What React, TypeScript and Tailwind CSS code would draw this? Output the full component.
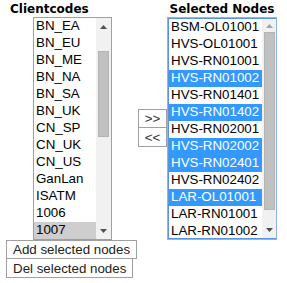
import React from "react";

const leftItems: { t: string; sel?: boolean }[] = [
  { t: "BN_EA" },
  { t: "BN_EU" },
  { t: "BN_ME" },
  { t: "BN_NA" },
  { t: "BN_SA" },
  { t: "BN_UK" },
  { t: "CN_SP" },
  { t: "CN_UK" },
  { t: "CN_US" },
  { t: "GanLan" },
  { t: "ISATM" },
  { t: "1006" },
  { t: "1007", sel: true },
];

const rightItems: { t: string; sel?: boolean }[] = [
  { t: "BSM-OL01001" },
  { t: "HVS-OL01001" },
  { t: "HVS-RN01001" },
  { t: "HVS-RN01002", sel: true },
  { t: "HVS-RN01401" },
  { t: "HVS-RN01402", sel: true },
  { t: "HVS-RN02001" },
  { t: "HVS-RN02002", sel: true },
  { t: "HVS-RN02401", sel: true },
  { t: "HVS-RN02402" },
  { t: "LAR-OL01001", sel: true },
  { t: "LAR-RN01001" },
  { t: "LAR-RN01002" },
];

function Up({ color }: { color: string }) {
  return (
    <svg width="7" height="4" viewBox="0 0 7 4" className="block">
      <polygon points="0,4 7,4 3.5,0" fill={color} />
    </svg>
  );
}
function Down({ color }: { color: string }) {
  return (
    <svg width="7" height="4" viewBox="0 0 7 4" className="block">
      <polygon points="0,0 7,0 3.5,4" fill={color} />
    </svg>
  );
}

export default function App() {
  const font = { fontFamily: '"Liberation Sans", Arial, sans-serif' };
  return (
    <div className="bg-white w-[287px] h-[283px] text-black" style={font}>
      <div className="flex items-start">
        {/* Left column */}
        <div className="w-[112px] flex flex-col">
          <div
            className="h-[17px] pt-[2px] pl-[10px] text-[12px] leading-[14px] font-bold"
            style={{ fontFamily: '"DejaVu Sans", Verdana, sans-serif' }}
          >
            Clientcodes
          </div>
          <div className="ml-[33px] w-[79px] h-[223px] border border-[#a0a0a0] flex">
            <div className="flex-1 flex flex-col">
              {leftItems.map((it) => (
                <div
                  key={it.t}
                  className={
                    "h-[17px] pl-[2px] text-[13.33px] leading-[15px] whitespace-nowrap " +
                    (it.sel ? "bg-[#cecece] text-black" : "")
                  }
                >
                  {it.t}
                </div>
              ))}
            </div>
            <div className="w-[15px] bg-[#f1f1f1] flex flex-col items-center">
              <div className="h-[17px] flex items-center justify-center">
                <Up color="#505050" />
              </div>
              <div className="mt-[16px] w-[11px] h-[86px] bg-[#c1c1c1] border border-[#b4b4b4]" />
              <div className="flex-1" />
              <div className="h-[17px] flex items-center justify-center">
                <Down color="#505050" />
              </div>
            </div>
          </div>
        </div>

        {/* Middle buttons */}
        <div className="ml-[26px] mt-[109px] w-[29px] flex flex-col">
          <div className="h-[19px] border border-[#a0a0a0] bg-white flex items-center justify-center text-[13.33px] leading-[15px] text-[#333]">
            &gt;&gt;
          </div>
          <div className="h-[19px] border border-[#a0a0a0] border-t-0 bg-white flex items-center justify-center text-[13.33px] leading-[15px] text-[#333]">
            &lt;&lt;
          </div>
        </div>

        {/* Right column */}
        <div className="w-[110px] flex flex-col">
          <div
            className="h-[17px] pt-[2px] text-center text-[12px] leading-[14px] font-bold whitespace-nowrap"
            style={{ fontFamily: '"DejaVu Sans", Verdana, sans-serif' }}
          >
            Selected Nodes
          </div>
          <div className="w-[110px] h-[223px] border border-[#8fb4ea] p-0 flex">
            <div className="flex-1 flex border border-[#5b93e3] border-r-0 min-w-0">
              <div className="flex-1 flex flex-col min-w-0">
                {rightItems.map((it) => (
                  <div
                    key={it.t}
                    className={
                      "h-[17px] shrink-0 pl-[2px] text-[13.33px] leading-[15px] whitespace-nowrap overflow-hidden " +
                      (it.sel ? "bg-[#3399ff] text-white" : "")
                    }
                  >
                    {it.t}
                  </div>
                ))}
              </div>
              <div className="w-[14px] bg-[#f1f1f1] flex flex-col items-center shrink-0">
                <div className="h-[13px] flex items-center justify-center">
                  <Up color="#a3a3a3" />
                </div>
                <div className="w-[11px] h-[178px] bg-[#c1c1c1] border border-[#b4b4b4]" />
                <div className="flex-1" />
                <div className="h-[17px] flex items-center justify-center">
                  <Down color="#505050" />
                </div>
              </div>
            </div>
          </div>
        </div>
      </div>

      {/* Bottom buttons */}
      <div className="ml-[6px] flex flex-col items-start">
        <div className="h-[19px] px-[6px] border border-[#a0a0a0] bg-white flex items-center text-[13.33px] leading-[15px] text-[#222] whitespace-nowrap">
          Add selected nodes
        </div>
        <div className="h-[19px] px-[6px] border border-[#a0a0a0] border-t-0 bg-white flex items-center text-[13.33px] leading-[15px] text-[#222] whitespace-nowrap">
          Del selected nodes
        </div>
      </div>
    </div>
  );
}
